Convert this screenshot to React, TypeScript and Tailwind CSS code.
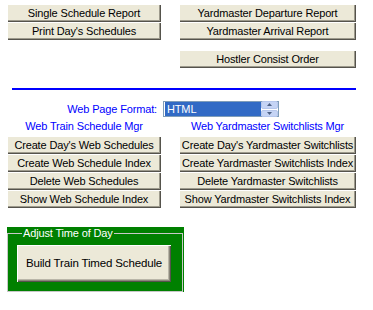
import React from "react";

const face =
  "flex items-center justify-center whitespace-nowrap bg-[#ece9d8] text-black leading-none";
const bevel =
  "shadow-[inset_1px_1px_0_#ffffff,inset_-1px_-1px_0_#55534c,inset_-2px_-2px_0_#9d9a8c]";

function Btn({ children, className = "" }: { children: React.ReactNode; className?: string }) {
  return <div className={`${face} ${bevel} h-[18px] ${className}`}>{children}</div>;
}

function Spinner() {
  return (
    <div className="flex flex-col w-[17px] h-[16px] gap-px">
      <div className="flex flex-1 items-center justify-center rounded-[2px] bg-[#c5d4f5] border border-[#b6c7ec]">
        <svg width="5" height="3" viewBox="0 0 5 3">
          <path d="M2.5 0 L5 3 L0 3 Z" fill="#4d6185" />
        </svg>
      </div>
      <div className="flex flex-1 items-center justify-center rounded-[2px] bg-[#c5d4f5] border border-[#b6c7ec]">
        <svg width="5" height="3" viewBox="0 0 5 3">
          <path d="M0 0 L5 0 L2.5 3 Z" fill="#4d6185" />
        </svg>
      </div>
    </div>
  );
}

const webRows: [string, string][] = [
  ["Create Day's Web Schedules", "Create Day's Yardmaster Switchlists"],
  ["Create Web Schedule Index", "Create Yardmaster Switchlists Index"],
  ["Delete Web Schedules", "Delete Yardmaster Switchlists"],
  ["Show Web Schedule Index", "Show Yardmaster Switchlists Index"],
];

export default function App() {
  return (
    <div className="w-[373px] h-[310px] bg-white text-[11px] tracking-[-0.15px] font-['Liberation_Sans',Arial,sans-serif] overflow-hidden">
      {/* reports */}
      <div className="flex gap-[18px] pt-[4px] pl-[7px]">
        <div className="flex flex-col w-[154px]">
          <Btn>Single Schedule Report</Btn>
          <Btn>Print Day's Schedules</Btn>
        </div>
        <div className="flex flex-col w-[177px]">
          <Btn>Yardmaster Departure Report</Btn>
          <Btn>Yardmaster Arrival Report</Btn>
          <Btn className="mt-[10px]">Hostler Consist Order</Btn>
        </div>
      </div>

      <div className="ml-[12px] mt-[20px] w-[344px] h-[2px] bg-[#0000ff]" />

      {/* web format */}
      <div className="flex items-center mt-[11px] h-[16px]">
        <div className="w-[157px] text-right text-[#0000ff]">Web Page Format:</div>
        <div className="ml-[6px] flex items-center w-[116px] h-[16px] border border-[#7f9db9] bg-white">
          <div className="flex-1 h-[14px] ml-px bg-[#316ac5] text-white pl-[2px] leading-[14px]">HTML</div>
          <Spinner />
        </div>
      </div>

      <div className="flex gap-[18px] pl-[7px] h-[19px] items-center text-[#0000ff]">
        <div className="w-[154px] text-center">Web Train Schedule Mgr</div>
        <div className="w-[177px] text-center">Web Yardmaster Switchlists Mgr</div>
      </div>

      <div className="grid grid-cols-[154px_177px] gap-x-[18px] pl-[7px]">
        {webRows.map(([a, b]) => (
          <React.Fragment key={a}>
            <Btn>{a}</Btn>
            <Btn>{b}</Btn>
          </React.Fragment>
        ))}
      </div>

      {/* adjust time group */}
      <div className="ml-[7px] mt-[19px] w-[177px] h-[65px] bg-[#008000] pr-px">
        <fieldset className="h-[65px] border border-[#c8c8c8] px-[9px] m-0">
          <legend className="ml-[5px] px-[1px] text-white leading-[13px]">Adjust Time of Day</legend>
          <div
            className={`${face} mt-[5px] w-[154px] h-[37px] text-[11.5px] shadow-[inset_1px_1px_0_#ffffff,inset_-1px_-1px_0_#55534c,inset_-2px_-2px_0_#8a877a,inset_-3px_-3px_0_#b9b6a8]`}
          >
            Build Train Timed Schedule
          </div>
        </fieldset>
      </div>
    </div>
  );
}
